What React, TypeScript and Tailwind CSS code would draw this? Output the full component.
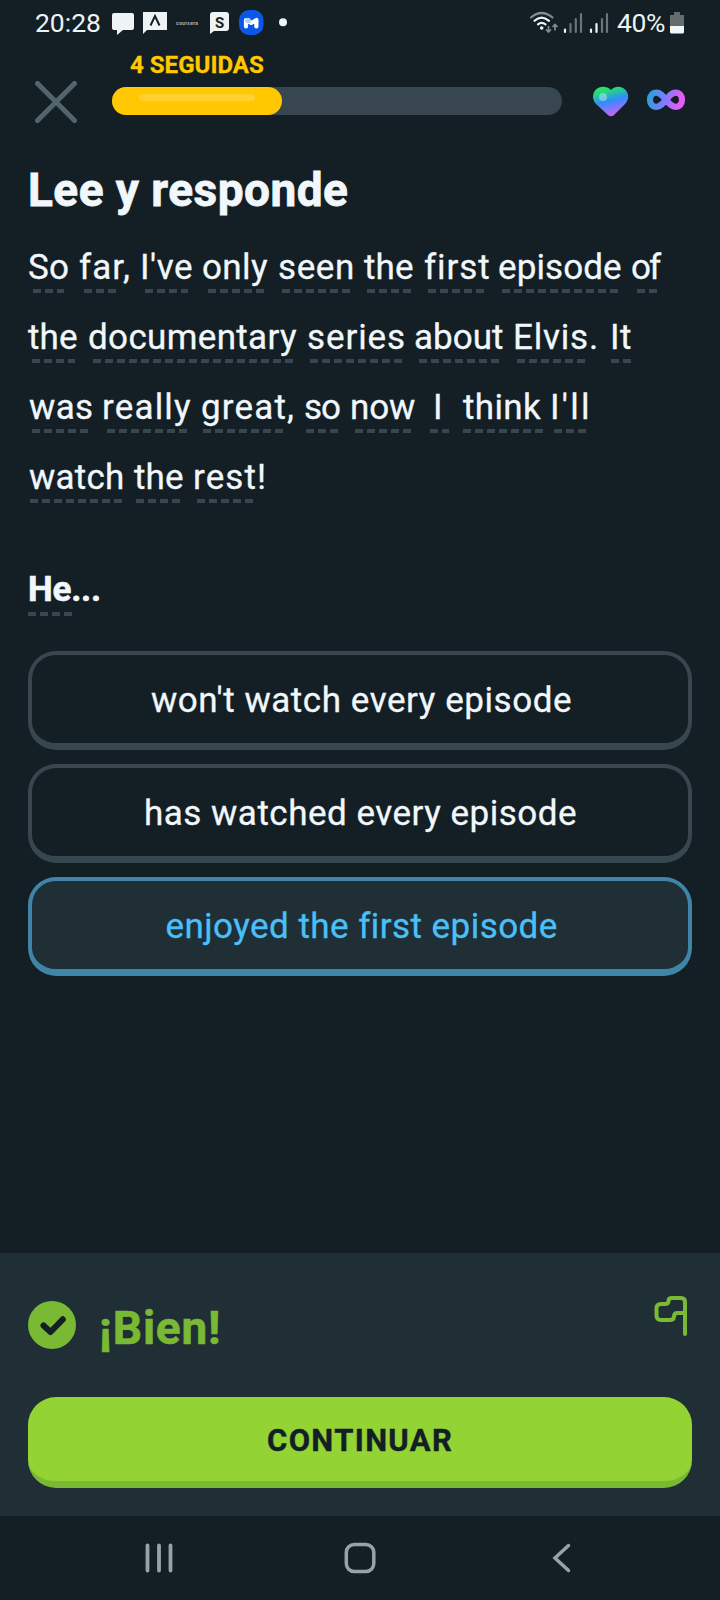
import { useLayoutEffect, useRef, useState } from "react";

type FitProps = { text: string; width: number; className?: string };

// Sets tracking so that the inked part of the text spans exactly `width` pixels.
function Fit({ text, width, className = "" }: FitProps) {
  const ref = useRef<HTMLSpanElement>(null);
  const [fit, setFit] = useState({ spacing: 0, shift: 0 });
  useLayoutEffect(() => {
    const ctx = document.createElement("canvas").getContext("2d");
    if (!ref.current || !ctx) return;
    const s = getComputedStyle(ref.current);
    ctx.font = `${s.fontWeight} ${s.fontSize} ${s.fontFamily}`;
    const m = ctx.measureText(text);
    const ink = m.actualBoundingBoxLeft + m.actualBoundingBoxRight;
    const spacing = text.length > 1 ? (width - ink) / (text.length - 1) : 0;
    setFit({ spacing, shift: m.actualBoundingBoxLeft });
  }, [text, width]);
  return (
    <span className={`block whitespace-pre ${className}`} style={{ width }}>
      <span ref={ref} className="block" style={{ letterSpacing: fit.spacing, marginLeft: fit.shift }}>
        {text}
      </span>
    </span>
  );
}

// [text, ink start, ink end, dash start, dash end]
type Word = [string, number, number, number, number];

const LINES: Word[][] = [
  [
    ["So", 29, 68, 33, 64],
    ["far,", 80, 129, 84, 117],
    ["I've", 143, 192, 145, 188],
    ["only", 203, 268, 208, 265],
    ["seen", 279, 352, 282, 351],
    ["the", 364, 413, 367, 411],
    ["first", 424, 488, 428, 484],
    ["episode", 499, 621, 502, 618],
    ["of", 632, 662, 637, 657],
  ],
  [
    ["the", 28, 77, 32, 75],
    ["documentary", 89, 297, 93, 293],
    ["series", 308, 404, 310, 403],
    ["about", 415, 503, 419, 499],
    ["Elvis.", 515, 596, 517, 585],
    ["It", 613, 631, 611, 631],
  ],
  [
    ["was", 29, 92, 32, 88],
    ["really", 104, 191, 107, 187],
    ["great,", 202, 293, 203, 283],
    ["so", 305, 340, 306, 338],
    ["now", 352, 415, 355, 412],
    ["I", 436, 440, 430, 449],
    ["think", 463, 541, 463, 543],
    ["I'll", 553, 587, 554, 586],
  ],
  [
    ["watch", 29, 122, 30, 122],
    ["the", 134, 183, 136, 180],
    ["rest!", 195, 264, 197, 253],
  ],
];

const DASH = "h-1 bg-[repeating-linear-gradient(90deg,#37464f_0px,#37464f_8px,transparent_8px,transparent_12px)]";

function Line({ words }: { words: Word[] }) {
  return (
    <div className="flex h-[70px]">
      {words.map(([text, x0, x1, d0, d1], i) => (
        <div key={i} className="shrink-0" style={{ width: x1 - x0, marginLeft: x0 - (i ? words[i - 1][2] : 0) }}>
          <Fit text={text} width={x1 - x0} className="h-11 text-[35px] leading-[46px] [-webkit-text-stroke:0.3px]" />
          <div className={DASH} style={{ width: d1 - d0, marginLeft: d0 - x0 }} />
        </div>
      ))}
    </div>
  );
}

function Option({ text, width, selected = false }: { text: string; width: number; selected?: boolean }) {
  return (
    <button
      className={`flex h-[99px] w-full items-center justify-center rounded-[28px] border-4 border-b-[7px] pt-1 pl-0.5 text-[35px] leading-11 [-webkit-text-stroke:0.3px] ${
        selected ? "border-[#3f85a7] bg-[#202f36] text-[#49c0f8]" : "border-[#37464f]"
      }`}
    >
      <Fit text={text} width={width} className="text-left" />
    </button>
  );
}

function StatusBar() {
  return (
    <div className="flex h-[46px] shrink-0 text-[26.5px] leading-[46px] text-[#eef3f5]">
      <Fit text="20:28" width={64} className="ml-9" />
      <svg className="ml-[5px] h-[46px] w-[190px]" viewBox="105 0 190 46">
        <path d="M114 13h18q2 0 2 2v13q0 2-2 2h-9l-6 5v-5h-3q-2 0-2-2V15q0-2 2-2z" fill="#eef3f5" />
        <path d="M143 12h24v18h-20l-4 4z" fill="#eef3f5" />
        <path d="M150.500 25.500l4.500-9.500 4.500 9.500" fill="none" stroke="#131f24" strokeWidth="2" />
        <text x="176" y="25" fontSize="5" fontWeight="700" textLength="22" fill="#aab2b5" fontFamily="Roboto, sans-serif">coursera</text>
        <path d="M213 12h13q3 0 3 3v13q0 3-3 3h-12l-4 3V15q0-3 3-3z" fill="#eef3f5" />
        <text x="219.500" y="27.500" fontSize="15" fontWeight="700" textAnchor="middle" fill="#131f24" fontFamily="Roboto, sans-serif">S</text>
        <rect x="239" y="10" width="24.500" height="25" rx="10" fill="#0b57e8" />
        <path d="M246 26.500v-6.500l5.200 3 5.200-3v6.500" fill="none" stroke="#fff" strokeWidth="4.200" strokeLinecap="round" strokeLinejoin="round" />
        <circle cx="248" cy="20.500" r="2.800" fill="#a9d3ff" />
        <circle cx="283" cy="22.300" r="4" fill="#eef3f5" />
      </svg>
      <svg className="ml-[230px] h-[46px] w-[90px] shrink-0" viewBox="525 0 90 46">
        <g fill="none" strokeLinecap="round" strokeWidth="2.200">
          <path d="M531 17.500q10.500-9 21.500 0" stroke="#858c8f" />
          <path d="M534.500 20.800q7-6.500 14.500 0M538 24.300q3.500-3 7.500 0" stroke="#eef3f5" />
        </g>
        <circle cx="541.700" cy="28" r="1.800" fill="#eef3f5" />
        <path d="M548.500 26v6m-2.500-2.500l2.500 2.500 2.500-2.500M555 30.500v-6m-2.500 2.500l2.500-2.500 2.500 2.500" fill="none" stroke="#858c8f" strokeWidth="1.700" />
        <g strokeWidth="2.200" strokeLinecap="round" stroke="#6b7478">
          <path d="M570.500 24v8M575.800 19v13M581 14v18M602 19v13M607 14v18" />
          <path d="M565 29.500v2.500M591 29.500v2.500M596.500 24v8" stroke="#eef3f5" />
        </g>
      </svg>
      <Fit text="40%" width={48} className="ml-[2px]" />
      <svg className="ml-[5px] h-[46px] w-[14px]" viewBox="670 0 14 46">
        <path d="M670 15h4v-3h6v3h4v11h-14z" fill="#656c6f" />
        <path d="M670 26h14v6q0 1.500-1.500 1.500h-11q-1.500 0-1.500-1.500z" fill="#f3f7f8" />
      </svg>
    </div>
  );
}

function Header() {
  return (
    <div className="flex h-[82px] shrink-0">
      <svg className="mt-[35px] ml-[35px] size-[42px] shrink-0" viewBox="0 0 42 42" stroke="#52656d" strokeWidth="5" strokeLinecap="round">
        <path d="M2.500 2.500L39.500 39.500M39.500 2.500L2.500 39.500" />
      </svg>
      <div className="ml-[35px] w-[450px] shrink-0 pt-[7px]">
        <Fit
          text="4 SEGUIDAS"
          width={133}
          className="ml-[18px] h-6 text-2xl leading-6 font-bold text-[#ffc800] [-webkit-text-stroke:0.3px]"
        />
        <div className="mt-2.5 h-7 rounded-full bg-[#37464f]">
          <div className="h-7 w-[170px] rounded-full bg-[#ffc800] px-[27px] pt-[7px]">
            <div className="h-[7px] rounded-full bg-[#ffd02f]" />
          </div>
        </div>
      </div>
      <svg className="mt-[40px] ml-[30px] h-[31px] w-[37px] shrink-0" viewBox="592 86 37 31">
        <defs>
          <linearGradient id="heart" x1="0.250" y1="0" x2="0.550" y2="1">
            <stop offset="0.120" stopColor="#24e36b" />
            <stop offset="0.500" stopColor="#2f8dff" />
            <stop offset="0.950" stopColor="#c065f5" />
          </linearGradient>
        </defs>
        <path d="M611 90C607 86 600 85.500 596 89.500C592 93.500 592 99.500 596 104L608.500 115.500Q611 117 613.500 115.500L625 104C629.500 99.500 629 93 625 89.500C621 85.500 615 86 611 90z" fill="url(#heart)" />
        <circle cx="603" cy="97" r="4" fill="#fff" opacity="0.350" />
      </svg>
      <svg className="mt-[43px] ml-[17px] h-[22px] w-[40px] shrink-0" viewBox="646 89 40 22">
        <defs>
          <linearGradient id="inf" gradientUnits="userSpaceOnUse" x1="647" y1="95" x2="685" y2="105">
            <stop offset="0.050" stopColor="#2b9fdc" />
            <stop offset="0.450" stopColor="#7c7cff" />
            <stop offset="0.850" stopColor="#e45cf5" />
          </linearGradient>
        </defs>
        <path d="M666 100C662 95 660 92.700 656.500 92.700C652.500 92.700 650 95.500 650 99.800C650 104 652.500 106.800 656.500 106.800C660 106.800 662 104.500 666 100C670 95 672 92.700 675.500 92.700C679.500 92.700 682 95.500 682 99.800C682 104 679.500 106.800 675.500 106.800C672 106.800 670 104.500 666 100z" fill="none" stroke="url(#inf)" strokeWidth="6.200" />
      </svg>
    </div>
  );
}

function Footer() {
  return (
    <div className="mt-auto h-[263px] shrink-0 bg-[#202f36] px-7">
      <div className="flex h-[144px]">
        <svg className="mt-12 size-12" viewBox="0 0 48 48">
          <circle cx="24" cy="24" r="24" fill="#79b933" />
          <path d="M15.500 24.500l7 6.500 12.300-12.700" fill="none" stroke="#131f24" strokeWidth="6" strokeLinecap="round" strokeLinejoin="round" />
        </svg>
        <Fit
          text="¡Bien!"
          width={118}
          className="mt-[47px] ml-[25px] text-[46px] leading-[56px] font-bold text-[#79b933] [-webkit-text-stroke:0.6px]"
        />
        <svg className="mt-[42px] mr-[4px] ml-auto h-[42px] w-[35px]" viewBox="653 1295 35 42" fill="none" stroke="#79b933" strokeWidth="4" strokeLinecap="round" strokeLinejoin="round">
          <path d="M685 1334V1302Q685 1298 681 1298H672Q668.500 1298 668.500 1301T665 1304H661Q656.500 1304 656.500 1308.500V1315.500Q656.500 1320 661 1320H669.500Q674 1320 674 1316.500T677.500 1313H685" />
        </svg>
      </div>
      <button className="flex h-[91px] w-full justify-center rounded-[28px] border-b-[7px] border-[#79b933] bg-[#93d333] pt-[18px] text-[31px] leading-[52px] font-bold text-[#131f24] [-webkit-text-stroke:0.4px]">
        <Fit text="CONTINUAR" width={184} className="text-left" />
      </button>
    </div>
  );
}

function NavBar() {
  return (
    <div className="flex h-[84px] shrink-0 items-center">
      <svg className="ml-[143px] h-8 w-8" viewBox="143 1542 32 32" stroke="#9ba2a5" strokeWidth="3.800" strokeLinecap="round">
        <path d="M147.500 1545.500v25M159 1545.500v25M170.500 1545.500v25" />
      </svg>
      <svg className="ml-[169px] h-8 w-8" viewBox="344 1542 32 32" fill="none" stroke="#9ba2a5" strokeWidth="3.500">
        <rect x="346.300" y="1544.500" width="27.500" height="27" rx="8" />
      </svg>
      <svg className="ml-[176px] h-8 w-5" viewBox="552 1542 20 32" fill="none" stroke="#9ba2a5" strokeWidth="3.500" strokeLinecap="round">
        <path d="M568.500 1545.500L555 1558l13.500 12.500" />
      </svg>
    </div>
  );
}

export default function App() {
  return (
    <div className="flex h-[1600px] w-[720px] flex-col overflow-hidden bg-[#131f24] font-[Roboto,sans-serif] text-[#f1f7fb]">
      <StatusBar />
      <Header />
      <Fit
        text="Lee y responde"
        width={317}
        className="mt-[34px] ml-[30px] h-[55px] text-[46px] leading-[56px] font-bold [-webkit-text-stroke:0.8px]"
      />
      <div className="mt-7">
        {LINES.map((words, i) => (
          <Line key={i} words={words} />
        ))}
      </div>
      <div className="mt-[42px] ml-7">
        <Fit text="He..." width={69} className="ml-0.5 h-11 text-[35px] leading-[46px] font-bold [-webkit-text-stroke:0.6px]" />
        <div className={`mt-px w-11 ${DASH}`} />
      </div>
      <div className="mt-[35px] flex flex-col gap-3.5 px-7">
        <Option text="won't watch every episode" width={420} />
        <Option text="has watched every episode" width={430} />
        <Option text="enjoyed the first episode" width={389} selected />
      </div>
      <Footer />
      <NavBar />
    </div>
  );
}
